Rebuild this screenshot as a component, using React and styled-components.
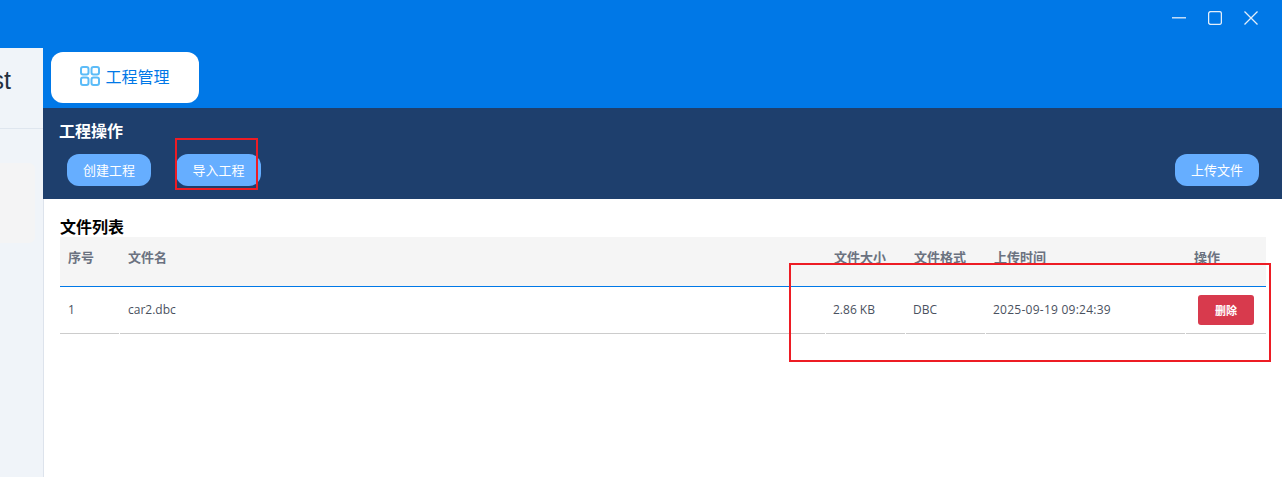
import React from 'react';
import styled, { createGlobalStyle } from 'styled-components';

const FONT = `"Open Sans", "Noto Sans CJK SC", sans-serif`;

const GlobalStyle = createGlobalStyle`
  html, body {
    margin: 0;
    padding: 0;
    height: 100%;
    overflow: hidden;
    background: #fff;
    font-family: ${FONT};
  }
`;

const Page = styled.div`
  position: relative;
  width: 1282px;
  height: 477px;
  display: flex;
  flex-direction: column;
  overflow: hidden;
`;

const TitleBar = styled.div`
  height: 48px;
  flex: none;
  background: #0078e7;
  display: flex;
  justify-content: flex-end;
  align-items: flex-start;
  padding: 11px 24px 0 0;
  gap: 22px;
  box-sizing: border-box;
`;

const WindowButton = styled.svg`
  width: 14px;
  height: 14px;
  fill: none;
  stroke: #e3eefa;
  stroke-width: 1.3;
`;

const Body = styled.div`
  flex: 1;
  display: flex;
  min-height: 0;
`;

const Sidebar = styled.div`
  width: 43px;
  flex: none;
  background: #f0f4f9;
  overflow: hidden;
  display: flex;
  flex-direction: column;
`;

const Brand = styled.div`
  height: 81px;
  flex: none;
  border-bottom: 1px solid #dfe6ef;
  display: flex;
  align-items: center;
  justify-content: flex-end;
  box-sizing: border-box;
  padding: 0 32px 15px 0;
  font-family: "Liberation Sans", sans-serif;
  font-size: 25px;
  color: #24303f;
  white-space: nowrap;
`;

const SideCard = styled.div`
  width: 35px;
  height: 80px;
  margin-top: 34px;
  background: #f4f4f5;
  border-radius: 0 6px 6px 0;
`;

const Main = styled.div`
  flex: 1;
  min-width: 0;
  display: flex;
  flex-direction: column;
`;

const TabStrip = styled.div`
  height: 60px;
  flex: none;
  background: #0078e7;
  padding: 4px 0 0 8px;
  box-sizing: border-box;
`;

const Tab = styled.div`
  width: 148px;
  height: 51px;
  background: #fff;
  border-radius: 12px;
  display: flex;
  align-items: center;
  justify-content: center;
  gap: 5px;
  padding-bottom: 3px;
  box-sizing: border-box;
  color: #0078e7;
  font-size: 16px;
`;

const Panel = styled.div`
  height: 91px;
  flex: none;
  background: #1e3f6d;
  padding: 13px 23px 0 16px;
  box-sizing: border-box;
`;

const PanelTitle = styled.div`
  color: #fff;
  font-size: 16px;
  font-weight: 700;
  line-height: 20px;
`;

const PanelActions = styled.div`
  display: flex;
  align-items: center;
  margin-top: 13px;
  padding-left: 8px;
`;

const ActionButton = styled.button`
  width: ${(p) => p.$w || 84}px;
  height: 32px;
  border: 0;
  padding: 0 0 2px;
  border-radius: 12px;
  background: #66aeff;
  color: #fff;
  font-family: ${FONT};
  font-size: 13px;
  margin-right: ${(p) => p.$gap || 0}px;
  margin-left: ${(p) => (p.$push ? 'auto' : '0')};
`;

const Content = styled.div`
  flex: 1;
  padding: 18px 16px 0 16px;
  border-left: 1px solid #dde3ec;
`;

const ListTitle = styled.div`
  font-size: 16px;
  font-weight: 700;
  line-height: 20px;
  color: #000;
`;

const Row = styled.div`
  display: grid;
  grid-template-columns: 59px 1fr 79px 79px 199px 80px;
  column-gap: 1px;
`;

const HeadRow = styled(Row)`
  height: 50px;
  background: #f5f5f5;
  border-bottom: 1px solid #0078e7;
  box-sizing: border-box;
`;

const HeadCell = styled.div`
  padding: 11px 0 0 8px;
  font-size: 13px;
  font-weight: 700;
  line-height: 18px;
  color: #6b7280;
`;

const Cell = styled.div`
  height: 47px;
  box-sizing: border-box;
  border-bottom: 1px solid #cccccc;
  display: flex;
  align-items: center;
  padding: 0 0 ${(p) => (p.$action ? 0 : 2)}px ${(p) => (p.$tight ? 7 : 8)}px;
  font-size: 12px;
  letter-spacing: ${(p) => (p.$wide ? '0.25px' : '0')};
  color: #4a5160;
`;

const DeleteButton = styled.button`
  width: 56px;
  height: 30px;
  margin-left: 4px;
  border: 0;
  padding: 0;
  border-radius: 3px;
  background: #d83a4d;
  color: #fff;
  font-family: ${FONT};
  font-size: 11px;
  font-weight: 700;
`;

const Annotation = styled.div`
  position: absolute;
  box-sizing: border-box;
  border: 2px solid #ed1c24;
  left: ${(p) => p.$x}px;
  top: ${(p) => p.$y}px;
  width: ${(p) => p.$w}px;
  height: ${(p) => p.$h}px;
`;

const GridIcon = () => (
  <svg width="20" height="20" viewBox="0 0 20 20" fill="none" stroke="#5cbcf8" strokeWidth="2">
    <rect x="1" y="1" width="7.5" height="7.5" rx="2" />
    <rect x="11.5" y="1" width="7.5" height="7.5" rx="2" />
    <rect x="1" y="11.5" width="7.5" height="7.5" rx="2" />
    <rect x="11.5" y="11.5" width="7.5" height="7.5" rx="2" />
  </svg>
);

const columns = ['序号', '文件名', '文件大小', '文件格式', '上传时间', '操作'];

const App = () => (
  <Page>
    <GlobalStyle />
    <TitleBar>
      <WindowButton viewBox="0 0 14 14"><path d="M0 6.8h14" /></WindowButton>
      <WindowButton viewBox="0 0 14 14"><rect x="0.6" y="0.6" width="12.8" height="12.8" rx="2" /></WindowButton>
      <WindowButton viewBox="0 0 14 14"><path d="M0.5 0.5l13 13M13.5 0.5l-13 13" /></WindowButton>
    </TitleBar>
    <Body>
      <Sidebar>
        <Brand>Test</Brand>
        <SideCard />
      </Sidebar>
      <Main>
        <TabStrip>
          <Tab><GridIcon />工程管理</Tab>
        </TabStrip>
        <Panel>
          <PanelTitle>工程操作</PanelTitle>
          <PanelActions>
            <ActionButton $gap={25}>创建工程</ActionButton>
            <ActionButton $w={85}>导入工程</ActionButton>
            <ActionButton $push>上传文件</ActionButton>
          </PanelActions>
        </Panel>
        <Content>
          <ListTitle>文件列表</ListTitle>
          <HeadRow>
            {columns.map((c) => <HeadCell key={c}>{c}</HeadCell>)}
          </HeadRow>
          <Row>
            <Cell>1</Cell>
            <Cell>car2.dbc</Cell>
            <Cell $tight>2.86 KB</Cell>
            <Cell $tight>DBC</Cell>
            <Cell $tight $wide>2025-09-19 09:24:39</Cell>
            <Cell $action><DeleteButton>删除</DeleteButton></Cell>
          </Row>
        </Content>
      </Main>
    </Body>
    <Annotation $x={175} $y={138} $w={83} $h={52} />
    <Annotation $x={789} $y={263} $w={482} $h={99} />
  </Page>
);

export default App;
